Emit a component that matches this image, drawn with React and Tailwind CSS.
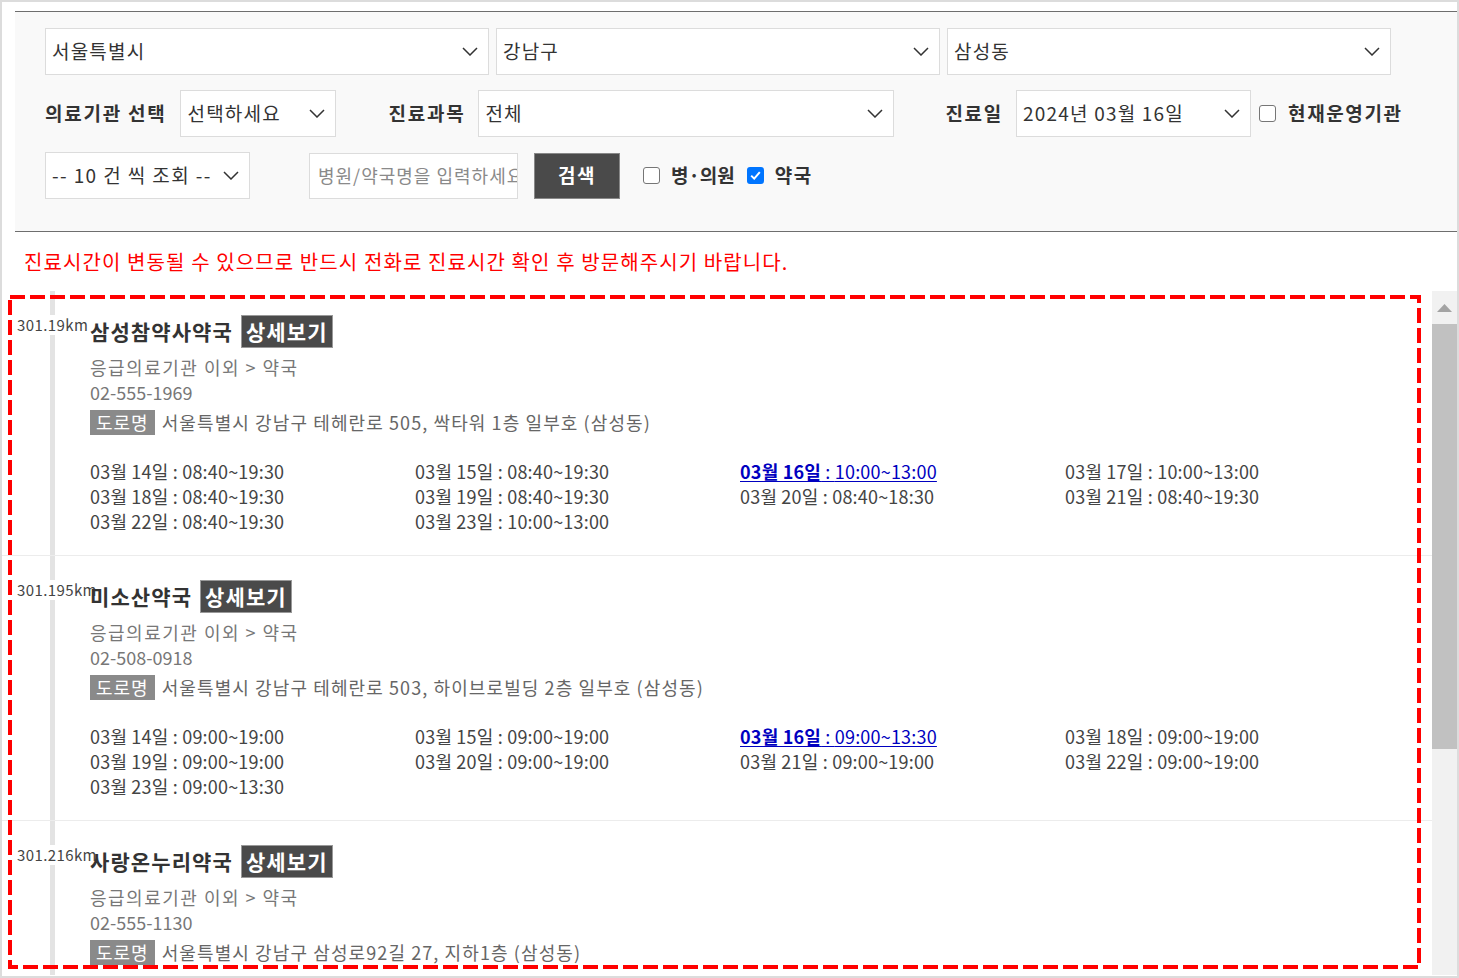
import clsx from "clsx";

const pharmacies = [
  {
    dist: "301.19km",
    name: "삼성참약사약국",
    phone: "02-555-1969",
    addr: "서울특별시 강남구 테헤란로 505, 싹타워 1층 일부호 (삼성동)",
    hours: [
      ["03월 14일", "08:40~19:30"],
      ["03월 15일", "08:40~19:30"],
      ["03월 16일", "10:00~13:00", true],
      ["03월 17일", "10:00~13:00"],
      ["03월 18일", "08:40~19:30"],
      ["03월 19일", "08:40~19:30"],
      ["03월 20일", "08:40~18:30"],
      ["03월 21일", "08:40~19:30"],
      ["03월 22일", "08:40~19:30"],
      ["03월 23일", "10:00~13:00"],
    ],
  },
  {
    dist: "301.195km",
    name: "미소산약국",
    phone: "02-508-0918",
    addr: "서울특별시 강남구 테헤란로 503, 하이브로빌딩 2층 일부호 (삼성동)",
    hours: [
      ["03월 14일", "09:00~19:00"],
      ["03월 15일", "09:00~19:00"],
      ["03월 16일", "09:00~13:30", true],
      ["03월 18일", "09:00~19:00"],
      ["03월 19일", "09:00~19:00"],
      ["03월 20일", "09:00~19:00"],
      ["03월 21일", "09:00~19:00"],
      ["03월 22일", "09:00~19:00"],
      ["03월 23일", "09:00~13:30"],
    ],
  },
  {
    dist: "301.216km",
    name: "사랑온누리약국",
    phone: "02-555-1130",
    addr: "서울특별시 강남구 삼성로92길 27, 지하1층 (삼성동)",
    hours: [],
  },
];

function Chevron() {
  return (
    <svg width="16" height="9" viewBox="0 0 16 9" className="shrink-0">
      <path d="M1 1l7 7 7-7" fill="none" stroke="#333" strokeWidth="1.5" />
    </svg>
  );
}

function SelectBox({ value, className }) {
  return (
    <div
      className={clsx(
        "flex h-[47px] shrink-0 items-center justify-between border border-[#dcdcdc] bg-white pl-[6px] pr-[10px] text-[19px] tracking-[1.2px] text-[#333]",
        className,
      )}
    >
      <span className="truncate">{value}</span>
      <Chevron />
    </div>
  );
}

function Check({ checked }) {
  if (checked) {
    return (
      <span className="flex h-[17px] w-[17px] shrink-0 items-center justify-center rounded-[3px] bg-[#0075ff]">
        <svg width="11" height="9" viewBox="0 0 11 9">
          <path d="M1.2 4.6l3 3 5.6-6.4" fill="none" stroke="#fff" strokeWidth="2" />
        </svg>
      </span>
    );
  }
  return <span className="block h-[17px] w-[17px] shrink-0 rounded-[3px] border border-[#767676] bg-white" />;
}

function Item({ p }) {
  return (
    <div className="relative border-b border-[#ececec] pb-[21px] pl-[88px] pt-[24px]">
      <span className="absolute left-[15px] top-[24px] bg-white text-[15px] leading-[20px] tracking-[0.4px] text-[#444]">
        {p.dist}
      </span>
      <div className="relative flex h-[33px] items-center">
        <span className="text-[21px] font-bold tracking-[1.1px] text-[#333]">{p.name}</span>
        <span className="ml-[8px] flex h-[33px] items-center border border-[#999] bg-[#4a4a4a] px-[4px] text-[21px] font-bold tracking-[1.1px] text-white">
          상세보기
        </span>
      </div>
      <div className="mt-[7px] text-[18px] leading-[25px] tracking-[1.5px] text-[#777]">
        응급의료기관 이외 &gt; 약국
      </div>
      <div className="text-[18px] leading-[25px] text-[#777]">{p.phone}</div>
      <div className="mt-[5px] flex h-[25px] items-center text-[18px]">
        <span className="flex h-[25px] items-center bg-[#8a8a8a] px-[6px] tracking-[1px] text-white">도로명</span>
        <span className="ml-[7px] tracking-[1.1px] text-[#666]">{p.addr}</span>
      </div>
      {p.hours.length > 0 && (
        <div className="mt-[24px] grid w-[1300px] grid-cols-4 text-[18px] leading-[25px] tracking-[0.2px] text-[#444]">
          {p.hours.map(([d, t, hl]) =>
            hl ? (
              <span key={d} className="text-[#0000c0] underline underline-offset-2">
                <b>{d}</b> : {t}
              </span>
            ) : (
              <span key={d}>
                {d} : {t}
              </span>
            ),
          )}
        </div>
      )}
    </div>
  );
}

export default function App() {
  return (
    <div className="h-[978px] w-[1459px] overflow-hidden border-2 border-[#dcdcdc] bg-white font-['Noto_Sans_CJK_KR','Noto_Sans',sans-serif]">
      <div className="pl-[13px] pt-[9px]">
        <div className="flex flex-col gap-[15px] border-y border-[#6e6e6e] bg-[#f9f9f9] pb-[32px] pl-[30px] pt-[16px]">
          <div className="flex gap-[7px]">
            <SelectBox value="서울특별시" className="w-[444px]" />
            <SelectBox value="강남구" className="w-[444px]" />
            <SelectBox value="삼성동" className="w-[444px]" />
          </div>
          <div className="flex items-center text-[19px] font-bold tracking-[1.75px] text-[#333]">
            <span>의료기관 선택</span>
            <SelectBox value="선택하세요" className="ml-[14px] w-[156px] font-normal" />
            <span className="ml-[52px]">진료과목</span>
            <SelectBox value="전체" className="ml-[13px] w-[416px] font-normal" />
            <span className="ml-[51px]">진료일</span>
            <SelectBox value="2024년 03월 16일" className="ml-[13px] w-[235px] font-normal tracking-[0.8px]" />
            <span className="ml-[8px]">
              <Check />
            </span>
            <span className="ml-[12px] tracking-[1.6px]">현재운영기관</span>
          </div>
          <div className="flex items-center text-[19px] font-bold text-[#333]">
            <SelectBox value="-- 10 건 씩 조회 --" className="w-[205px] font-normal tracking-[1.4px]" />
            <div className="ml-[59px] flex h-[46px] w-[209px] items-center overflow-hidden whitespace-nowrap border border-[#dcdcdc] bg-white pl-[8px] text-[18px] font-normal tracking-[1px] text-[#8a8a8a]">
              병원/약국명을 입력하세요
            </div>
            <button className="ml-[16px] flex h-[46px] w-[86px] items-center justify-center border border-[#888] bg-[#4a4a4a] text-[19px] font-bold tracking-[1.5px] text-white">
              검색
            </button>
            <span className="ml-[23px]">
              <Check />
            </span>
            <span className="ml-[11px]">병·의원</span>
            <span className="ml-[12px]">
              <Check checked />
            </span>
            <span className="ml-[11px] tracking-[1.6px]">약국</span>
          </div>
        </div>
      </div>

      <p className="ml-[22px] mt-[17px] text-[20px] leading-[26px] tracking-[1.1px] text-[#ff0000]">
        진료시간이 변동될 수 있으므로 반드시 전화로 진료시간 확인 후 방문해주시기 바랍니다.
      </p>

      <div className="mt-[16px] flex h-[684px]">
        <div className="relative h-full w-[1430px] overflow-hidden">
          <div className="absolute bottom-0 left-[48px] top-0 w-[5px] bg-[#e3e3e3]" />
          {pharmacies.map((p) => (
            <Item key={p.name} p={p} />
          ))}
          <svg
            width="1413"
            height="674"
            className="pointer-events-none absolute left-[6px] top-[4px]"
          >
            <rect
              x="2"
              y="2"
              width="1409"
              height="670"
              fill="none"
              stroke="#ff0000"
              strokeWidth="4"
              strokeDasharray="15 5"
            />
          </svg>
        </div>
        <div className="flex w-[25px] flex-col bg-[#f1f1f1]">
          <div className="flex h-[33px] items-center justify-center">
            <svg width="15" height="8" viewBox="0 0 15 8">
              <path d="M7.5 0L15 8H0z" fill="#a3a3a3" />
            </svg>
          </div>
          <div className="h-[425px] bg-[#c1c1c1]" />
        </div>
      </div>
    </div>
  );
}
